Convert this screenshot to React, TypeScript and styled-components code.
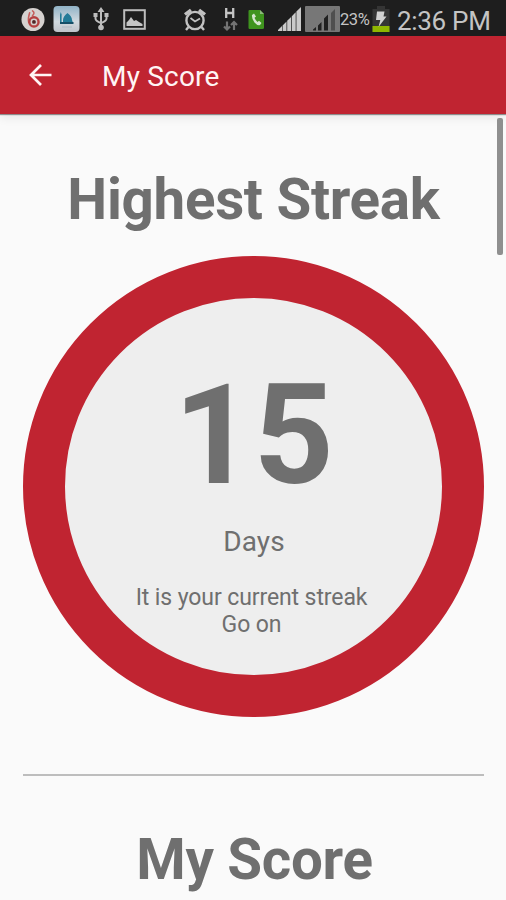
import React from "react";
import styled, { createGlobalStyle } from "styled-components";

const GlobalStyle = createGlobalStyle`
  * { box-sizing: border-box; }
  body { margin: 0; background: #fafafa; overflow: hidden; }
`;

const Screen = styled.div`
  position: relative;
  display: flex;
  flex-direction: column;
  width: 506px;
  height: 900px;
  overflow: hidden;
  background: #fafafa;
  color: #6f6f6f;
  font-family: Roboto, sans-serif;
`;

const StatusBar = styled.div`
  display: flex;
  flex: none;
  justify-content: space-between;
  height: 36px;
  padding: 2px 15px 0 21px;
  background: #1e1e1e;
  color: #c4c4c4;
`;

const StatusGroup = styled.div`
  display: flex;
  align-items: center;
`;

const StatusIcon = styled.svg<{ $gap?: number }>`
  display: block;
  flex: none;
  margin-right: ${({ $gap = 0 }) => $gap}px;
`;

const BatteryLevel = styled.span`
  width: 32px;
  padding-top: 1px;
  font-size: 16.5px;
  line-height: 20px;
  letter-spacing: -0.4px;
`;

const Clock = styled.span`
  width: 94px;
  padding-top: 3px;
  font-size: 26px;
  line-height: 30px;
  letter-spacing: -0.3px;
  white-space: nowrap;
`;

const AppBar = styled.header`
  position: relative;
  z-index: 1;
  display: flex;
  flex: none;
  align-items: center;
  height: 78px;
  padding-left: 27px;
  background: #c02431;
  box-shadow: 0 1px 1px rgba(0, 0, 0, 0.4), 0 3px 10px rgba(0, 0, 0, 0.09);
`;

const BackButton = styled.button`
  width: 26px;
  height: 26px;
  margin: 0 49px 0 0;
  padding: 0;
  border: 0;
  background: none;
`;

const Title = styled.h1`
  margin: 0;
  padding-top: 3px;
  color: #fff4f4;
  font-size: 28px;
  font-weight: 400;
  line-height: 34px;
  letter-spacing: 0.2px;
`;

const Content = styled.main`
  display: flex;
  flex-direction: column;
  padding: 53px 22px 0 23px;
`;

const Heading = styled.h2<{ $shift?: number }>`
  margin: 0;
  padding-left: ${({ $shift = 0 }) => $shift}px;
  font-size: 56.5px;
  font-weight: 700;
  line-height: 66px;
  letter-spacing: -0.3px;
  text-align: center;
  white-space: nowrap;
`;

const StreakCircle = styled.section`
  display: flex;
  flex: none;
  flex-direction: column;
  align-items: center;
  width: 461px;
  height: 461px;
  margin-top: 23px;
  padding-top: 55px;
  border: 42px solid #c02431;
  border-radius: 50%;
  background: #eee;
`;

const StreakNumber = styled.div`
  height: 164px;
  font-size: 140px;
  font-weight: 700;
  line-height: 164px;
  letter-spacing: -0.5px;
`;

const StreakUnit = styled.div`
  margin-top: 9px;
  padding-left: 1px;
  font-size: 28px;
  line-height: 32px;
  letter-spacing: 0.1px;
`;

const StreakNote = styled.p`
  margin: 27px 0 0;
  font-size: 23px;
  line-height: 26.5px;
  letter-spacing: -0.1px;
  text-align: center;
  padding-right: 4px;
`;

const Divider = styled.hr`
  width: 100%;
  height: 2px;
  margin: 57px 0 51px;
  border: 0;
  background: #bdbdbd;
`;

const ScrollThumb = styled.div`
  position: absolute;
  z-index: 2;
  top: 118px;
  right: 3px;
  width: 6px;
  height: 137px;
  border-radius: 2px;
  background: #8f8f8f;
`;

const RecorderIcon = () => (
  <StatusIcon width="24" height="25" viewBox="0 0 25 26" $gap={8}>
    <circle cx="12.5" cy="13" r="12" fill="#d5d1cf" />
    <path d="M9 6Q7 12 8 16M12 4Q15 6 12 9" fill="none" stroke="#c55e5b" strokeWidth="1.6" strokeLinecap="round" />
    <circle cx="13.5" cy="15.5" r="4.8" fill="none" stroke="#b54141" strokeWidth="2.5" />
    <circle cx="13.5" cy="15.5" r="2" fill="#512424" />
  </StatusIcon>
);

const MosqueIcon = () => (
  <StatusIcon width="27" height="28" viewBox="0 0 27 28" $gap={13}>
    <defs>
      <linearGradient id="sky" x1="0" y1="0" x2="0" y2="1">
        <stop offset="0" stopColor="#91b3c7" />
        <stop offset="0.6" stopColor="#d1d9df" />
        <stop offset="1" stopColor="#bfc3ca" />
      </linearGradient>
    </defs>
    <rect x="0.5" y="1" width="26" height="26" rx="4" fill="url(#sky)" />
    <path d="M7 18V9.5L7.8 7l.8 2.5V18z" fill="#237b98" />
    <path d="M10 18v-3q0-3.5 4.5-7 4.5 3.5 4.5 7l1 3z" fill="#237b98" />
    <path d="M7 18h13.5" stroke="#164f68" strokeWidth="2" />
    <path d="M9 22h10" stroke="#aeb8c2" strokeWidth="1" />
  </StatusIcon>
);

const UsbIcon = () => (
  <StatusIcon width="16" height="24" viewBox="0 0 16 24" $gap={14} fill="none" stroke="#bdbdbd" strokeWidth="2">
    <path d="M8 4v17M2.5 8v3.5q0 2.5 5.5 4.5M13.5 8v3.5q0 2.5-5.5 4.5" />
    <path d="M4.5 5 8 0l3.5 5zM.5 6h4v4h-4zM11.5 6h4v4h-4z" fill="#bdbdbd" stroke="none" />
    <circle cx="8" cy="20.5" r="2.8" fill="#bdbdbd" stroke="none" />
  </StatusIcon>
);

const PictureIcon = () => (
  <StatusIcon width="23" height="21" viewBox="0 0 23 21">
    <rect x="1.2" y="1.2" width="20.6" height="18.6" fill="none" stroke="#bdbdbd" strokeWidth="2" />
    <path d="M3.5 17v-3.5L6 11l2-3 3 4 2-1 3 2 3.5 2v2z" fill="#c5c5c5" />
  </StatusIcon>
);

const AlarmIcon = () => (
  <StatusIcon width="24" height="25" viewBox="0 0 24 25" $gap={16} fill="none" stroke="#c2c2c2">
    <circle cx="12" cy="13.5" r="8.6" strokeWidth="2.4" />
    <path d="M2 7.5 8 3M22 7.5 16 3" strokeWidth="3.4" />
    <path d="m5.5 20-2.5 3M18.5 20l2.5 3" strokeWidth="2.4" />
    <path d="M7.5 11 12 14.5l5-3" strokeWidth="1.8" />
  </StatusIcon>
);

const DataIcon = () => (
  <StatusIcon width="15" height="26" viewBox="0 0 15 26" $gap={10} fill="none">
    <path d="M3.2 2v10M10.2 2v10M3.2 7h7" stroke="#c4c4c4" strokeWidth="2.3" />
    <path d="M4 15.5v8M1 20.5l3 3 3-3M11 24v-8M8 19l3-3 3 3" stroke="#747474" strokeWidth="2.2" />
  </StatusIcon>
);

const CallIcon = () => (
  <StatusIcon width="17" height="21" viewBox="0 0 17 21" $gap={13}>
    <path d="M1.5 1H12l4 4v13.5q0 1.5-1.5 1.5h-13Q.5 20 .5 18.5V2q0-1 1-1z" fill="#3f941e" />
    <path d="M12 1v4h4z" fill="#8db97c" />
    <path d="m4 6 2-1.5 2 3-1.5 1.3q1 2.7 3 4.2l1.5-1.3 2.5 2.3-1.5 2q-2.5 1-5.5-2.5Q3.5 9.5 4 6z" fill="#d5e5ce" />
  </StatusIcon>
);

const SignalIcon = () => (
  <StatusIcon width="24" height="24" viewBox="0 0 24 24" $gap={3} fill="#cacaca">
    <path d="M0 24v-1l4-4v5zM4.600 24v-5.500l3.900-3.900V24zM9.200 24V13.800L13.100 10v14zM13.800 24V9.200l3.900-3.900V24zM18.400 24V4.600L23 0v24z" />
  </StatusIcon>
);

const WeakSignalIcon = () => (
  <StatusIcon width="35" height="26" viewBox="0 0 35 26">
    <rect width="35" height="26" rx="1" fill="#777" />
    <path d="M8 24.5v-1l3-2.5v3.5zM13 24.5v-5l3.5-3.5v8.5zM19 24.5V12.5l4-4v16z" fill="#202020" />
    <path d="M26 24.5V7l4-4v21.5z" fill="#4f4f4f" />
  </StatusIcon>
);

const BatteryIcon = () => (
  <StatusIcon width="18" height="26" viewBox="0 0 18 26" $gap={7}>
    <path d="M5 0h8v3h4.500v23H.5V3H5z" fill="#353535" />
    <path d="M.5 20h17v6H.5z" fill="#8fb700" />
    <path d="M5 5.5h7.5l-1 5H14.5L6.5 21l1.8-7H4z" fill="#d1d1d1" />
  </StatusIcon>
);

const BackArrow = () => (
  <svg width="26" height="26" viewBox="0 0 26 26" fill="none" stroke="#fff4f4" strokeWidth="2.7">
    <path d="M24.5 13H4M14 3 4 13l10 10" />
  </svg>
);

export default function App() {
  return (
    <>
      <GlobalStyle />
      <Screen>
        <StatusBar>
          <StatusGroup>
            <RecorderIcon />
            <MosqueIcon />
            <UsbIcon />
            <PictureIcon />
          </StatusGroup>
          <StatusGroup>
            <AlarmIcon />
            <DataIcon />
            <CallIcon />
            <SignalIcon />
            <WeakSignalIcon />
            <BatteryLevel>23%</BatteryLevel>
            <BatteryIcon />
            <Clock>2:36 PM</Clock>
          </StatusGroup>
        </StatusBar>
        <AppBar>
          <BackButton aria-label="Back">
            <BackArrow />
          </BackButton>
          <Title>My Score</Title>
        </AppBar>
        <Content>
          <Heading>Highest Streak</Heading>
          <StreakCircle>
            <StreakNumber>15</StreakNumber>
            <StreakUnit>Days</StreakUnit>
            <StreakNote>
              It is your current streak
              <br />
              Go on
            </StreakNote>
          </StreakCircle>
          <Divider />
          <Heading $shift={2}>My Score</Heading>
        </Content>
        <ScrollThumb />
      </Screen>
    </>
  );
}
